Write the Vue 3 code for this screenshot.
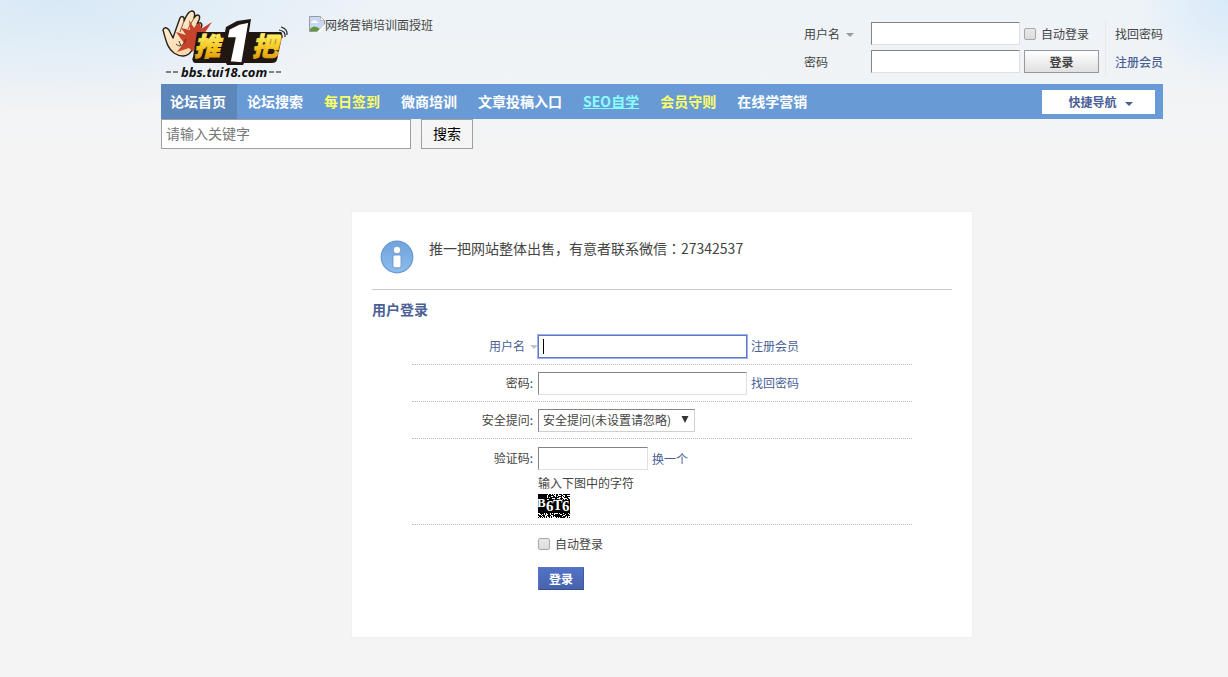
<script setup>
import { ref } from 'vue'

const navItems = [
  { label: '论坛首页', tone: 'active' },
  { label: '论坛搜索', tone: '' },
  { label: '每日签到', tone: 'yellow' },
  { label: '微商培训', tone: '' },
  { label: '文章投稿入口', tone: '' },
  { label: 'SEO自学', tone: 'cyan' },
  { label: '会员守则', tone: 'yellow' },
  { label: '在线学营销', tone: '' },
]

const top = ref({ user: '', password: '', auto: false })
const form = ref({ user: '', password: '', question: '0', code: '', auto: false })
const keyword = ref('')

// Speckles for the captcha: random runs in the strips above and below the characters.
const specks = []
let seed = 17
for (let y = 0; y < 24; y += 1) {
  for (let x = 0; x < 32; x += 1) {
    seed = (seed * 1103515245 + 12345) % 2147483648
    const edge = y < 6 || y > 18
    const left = x > 8 || y > 13
    if (left && edge && seed / 2147483648 < 0.38) specks.push({ x, y })
  }
}
</script>

<template>
  <div class="page">
    <div class="wrap">
      <header class="header">
        <a class="logo" href="#" aria-label="推1把">
          <svg width="130" height="72" viewBox="0 0 130 72">
            <defs>
              <linearGradient id="gold" x1="0" y1="0" x2="0" y2="1">
                <stop offset="0.2" stop-color="#fff36a" />
                <stop offset="0.6" stop-color="#f4c51f" />
                <stop offset="1" stop-color="#d88a08" />
              </linearGradient>
              <linearGradient id="skin" x1="0" y1="0" x2="1" y2="1">
                <stop offset="0" stop-color="#fff6df" />
                <stop offset="1" stop-color="#f6cf9c" />
              </linearGradient>
            </defs>
            <path d="M2 20 C3 16 8 18 9 22 L12 28 C14 22 16 16 19 8 C21 5 24 7 23 11 C25 6 28 1 31 1 C34 1 34 5 33 8 C36 3 40 5 38 10 L36 14 C40 11 42 14 40 18 L31 40 C27 48 19 47 13 43 C6 38 5 30 2 20 Z" fill="url(#skin)" stroke="#2b2019" stroke-width="1.4" stroke-linejoin="round" />
            <path d="M23 11 L19 22 M33 8 L27 19 M36 14 L31 23" fill="none" stroke="#6d4630" stroke-width="0.9" />
            <path d="M28 10 L33 18 L39 12 L40 19 L51 12 L43 24 L48 30 L37 31 L32 42 L28 38 L16 42 L23 33 L15 22 L25 25 L20 18 L29 20 Z" fill="#c8432b" />
            <path d="M15 34 C18 37 21 36 23 33 L25 29 M18 31 L20 36" fill="none" stroke="#4a2c1c" stroke-width="0.9" />
            <path d="M36 22 L64 22 L65 17 L76 11 L90 9 L88 22 L120 22 Q122 23 121 27 L116 50 Q115 53 111 53 L83 53 L82 55 L66 55 L65 53 L34 53 Q30 51 32 47 Z" fill="#201713" />
            <text x="33" y="46" font-size="26" font-style="italic" font-weight="900" fill="url(#gold)" stroke="url(#gold)" stroke-width="0.8">推</text>
            <text x="91" y="46" font-size="26" font-style="italic" font-weight="900" fill="url(#gold)" stroke="url(#gold)" stroke-width="0.8">把</text>
            <path d="M68 19 L78 14 L88 12 L81 53 L69 52 L74 28 L66 28 Z" fill="#fff" stroke="#201713" stroke-width="1.4" />
            <path d="M117 23 Q122 24 121 28 M118 20 Q125 21 124 27 M120 17 Q127 19 126 25" fill="none" stroke="#222" stroke-width="1.2" />
            <path d="M5 62 H10 M12 62 H17 M108 62 H113 M115 62 H120" stroke="#111" stroke-width="1.2" />
            <text class="domain" x="20" y="67" font-size="13">bbs.tui18.com</text>
          </svg>
        </a>
        <a class="banner" href="#">
          <svg width="16" height="16" viewBox="0 0 16 16" aria-hidden="true">
            <path d="M0.5 0.5 H11.5 L15.5 4.5 V9 L9 15.5 H0.5 Z" fill="#c8d8f4" stroke="#9b9b9b" />
            <path d="M11.5 0.5 V4.5 H15.5 Z" fill="#fff" stroke="#aaa" stroke-width="0.7" />
            <path d="M2 7 Q2 5 4 5 Q5 3 7 5 Q9 5 9 7 Z" fill="#fff" />
            <path d="M1 15 V13 Q5 8 11 13 L9 15 Z" fill="#5d9b3c" />
            <path d="M16 8 L8 16 H11 L16 11 Z" fill="#fff" />
          </svg>
          <span>网络营销培训面授班</span>
        </a>
        <form class="quick-login" @submit.prevent>
          <label class="quick-label" for="top-user">用户名 <i class="caret grey"></i></label>
          <input id="top-user" v-model="top.user" class="field" type="text" />
          <label class="auto"><input v-model="top.auto" class="tick" type="checkbox" />自动登录</label>
          <a class="side" href="#">找回密码</a>
          <label class="quick-label" for="top-pass">密码</label>
          <input id="top-pass" v-model="top.password" class="field" type="password" />
          <button class="grey-button" type="submit">登录</button>
          <a class="side strong" href="#">注册会员</a>
        </form>
      </header>

      <nav class="nav">
        <a v-for="item in navItems" :key="item.label" href="#" :class="item.tone">{{ item.label }}</a>
        <button class="shortcut" type="button">快捷导航<i class="caret blue"></i></button>
      </nav>

      <form class="search" @submit.prevent>
        <input v-model="keyword" type="text" placeholder="请输入关键字" aria-label="请输入关键字" />
        <button type="submit">搜索</button>
      </form>

      <main class="card">
        <div class="notice">
          <svg width="34" height="34" viewBox="0 0 34 34" aria-hidden="true">
            <defs>
              <linearGradient id="info" x1="0" y1="0" x2="0" y2="1">
                <stop offset="0" stop-color="#6fa3dd" />
                <stop offset="1" stop-color="#8dbcec" />
              </linearGradient>
            </defs>
            <circle cx="17" cy="17" r="15.8" fill="url(#info)" stroke="#6797cf" stroke-width="1.2" />
            <circle cx="17" cy="10" r="3.8" fill="#fff" stroke="#5f8fc8" stroke-width="0.8" />
            <rect x="13" y="15" width="8" height="12.8" rx="1.8" fill="#fff" stroke="#5f8fc8" stroke-width="0.8" />
          </svg>
          <p>推一把网站整体出售，有意者联系微信：27342537</p>
        </div>
        <h1>用户登录</h1>
        <form class="login" @submit.prevent>
          <div class="row">
            <label class="name link" for="user">用户名<i class="caret pale"></i></label>
            <span class="focus">
              <input id="user" v-model="form.user" class="field wide" type="text" />
              <i class="cursor"></i>
            </span>
            <a href="#">注册会员</a>
          </div>
          <div class="row">
            <label class="name" for="pass">密码:</label>
            <input id="pass" v-model="form.password" class="field wide" type="password" />
            <a href="#">找回密码</a>
          </div>
          <div class="row">
            <label class="name" for="question">安全提问:</label>
            <span class="select">
              <select id="question" v-model="form.question">
                <option value="0">安全提问(未设置请忽略)</option>
              </select>
              <svg width="8" height="7" viewBox="0 0 8 7" aria-hidden="true"><path d="M0.5 0 H7.5 L4 7 Z" fill="#333" /></svg>
            </span>
          </div>
          <div class="row code">
            <label class="name" for="code">验证码:</label>
            <div>
              <div class="line">
                <input id="code" v-model="form.code" class="field short" type="text" />
                <a href="#">换一个</a>
              </div>
              <p>输入下图中的字符</p>
              <svg class="captcha" width="32" height="24" viewBox="0 0 32 24">
                <rect width="32" height="24" fill="#000" />
                <rect v-for="s in specks" :key="s.y * 32 + s.x" :x="s.x" :y="s.y" width="1" height="1" fill="#fff" />
                <g>
                  <text x="-1" y="13" font-size="13">B</text>
                  <text x="15" y="16" font-size="14">T</text>
                  <text x="8" y="17" font-size="15">6</text>
                  <text x="24" y="17" font-size="15">6</text>
                </g>
              </svg>
            </div>
          </div>
          <div class="row submit">
            <label class="auto"><input v-model="form.auto" class="tick" type="checkbox" />自动登录</label>
            <button type="submit">登录</button>
          </div>
        </form>
      </main>
    </div>
  </div>
</template>

<style>
body {
  margin: 0;
  background: #f4f4f4;
}
</style>

<style scoped>
* {
  box-sizing: border-box;
}
.page {
  min-height: 100vh;
  padding: 0 65px 0 161px;
  font: 12px/18px "Noto Sans CJK SC", sans-serif;
  color: #444;
  background:
    radial-gradient(ellipse 320px 110px at 60px 0, #d8e9f6, transparent),
    radial-gradient(ellipse 90px 90px at 100% 0, #d8eaf9, transparent),
    linear-gradient(#edf3f8, #f4f4f4 160px);
}
a {
  color: #4a5f96;
  text-decoration: none;
}
p,
h1 {
  margin: 0;
}
input,
select,
button {
  font: inherit;
  color: inherit;
  margin: 0;
  border-radius: 0;
}
.header {
  display: flex;
  align-items: flex-start;
  height: 84px;
}
.logo {
  margin-top: 10px;
  height: 72px;
}
.domain {
  font-family: "Noto Sans", sans-serif;
  font-weight: 700;
  font-style: italic;
  fill: #111;
}
.banner {
  display: flex;
  margin: 16px auto 0 18px;
  color: #444;
}
.quick-login {
  display: grid;
  grid-template-columns: 67px 149px 75px 68px;
  grid-auto-rows: 23px;
  row-gap: 5px;
  align-items: center;
  padding-top: 22px;
}
.field {
  height: 23px;
  padding: 2px 4px;
  border: 1px solid;
  border-color: #848484 #e0e0e0 #e0e0e0 #848484;
  background: #fff;
}
.caret {
  display: inline-block;
  border: 4px solid transparent;
  border-bottom-width: 0;
  border-top-color: currentColor;
  vertical-align: 2px;
}
.caret.grey {
  margin-left: 3px;
  color: #999;
}
.caret.blue {
  margin-left: 8px;
  color: #4a5f96;
  vertical-align: 1px;
}
.caret.pale {
  margin-left: 5px;
  color: #c4c4c4;
}
.auto {
  display: flex;
  align-items: center;
}
.tick {
  appearance: none;
  width: 12px;
  height: 12px;
  margin-right: 5px;
  border: 1px solid #a8a8a8;
  border-radius: 2px;
  background: linear-gradient(#e9e9e9, #dcdcdc);
}
.tick:checked {
  background: #4a6cb8;
}
.quick-login .auto {
  margin-left: 4px;
}
.grey-button {
  height: 23px;
  margin-left: 4px;
  margin-right: -4px;
  padding: 0;
  border: 1px solid #999;
  background: linear-gradient(#fff, #e0e0e0);
  font-weight: 700;
  line-height: 20px;
}
.side {
  justify-self: end;
  padding-left: 9px;
  color: #444;
  line-height: 27px;
  border-left: 1px solid #e8ebee;
}
.side.strong {
  color: #4a5f96;
  font-weight: 500;
}
.nav {
  display: flex;
  align-items: center;
  height: 35px;
  padding-right: 8px;
  background: #689ad6;
}
.nav a {
  padding: 0 11px 0 10px;
  color: #fff;
  font-size: 14px;
  font-weight: 700;
  line-height: 35px;
  white-space: nowrap;
}
.nav a.active {
  padding: 0 11px 0 9px;
  background: #5b87ba;
}
.nav a.yellow {
  color: #ff6;
}
.nav a.cyan {
  color: #8ff;
  text-decoration: underline;
}
.shortcut {
  width: 113px;
  height: 24px;
  margin-left: auto;
  padding: 0 0 0 4px;
  border: 0;
  background: #fff;
  color: #4a5f96;
  font-weight: 700;
}
.search {
  display: flex;
  gap: 10px;
}
.search input,
.search button {
  height: 30px;
  border: 1px solid #a0a0a0;
  font-size: 14px;
}
.search input {
  width: 250px;
  padding: 0 4px 2px;
  background: #fff;
}
.search input::placeholder {
  color: #777;
}
.search button {
  width: 52px;
  padding: 0 0 2px;
  background: #f5f5f5;
  color: #000;
}
.card {
  width: 622px;
  max-width: 100%;
  margin: 62px auto 40px;
  padding: 20px 20px 47px;
  border: 1px solid #f0f0f0;
  background: #fff;
}
.notice {
  display: flex;
  gap: 15px;
  height: 58px;
  margin-bottom: 9px;
  padding: 0 8px;
  border-bottom: 1px solid #ccc;
}
.notice svg {
  margin-top: 8px;
}
.notice p {
  padding-top: 7px;
  font-family: "Noto Sans CJK JP", sans-serif;
  font-size: 14px;
  line-height: 18px;
}
h1 {
  color: #4a5f96;
  font-size: 14px;
  font-weight: 700;
  line-height: 20px;
}
.login {
  width: 500px;
  margin: 9px auto 0;
}
.row {
  display: flex;
  align-items: center;
  gap: 4px;
  height: 37px;
  border-bottom: 1px dotted #bbb;
}
.name {
  width: 122px;
  padding-right: 1px;
  text-align: right;
  white-space: nowrap;
}
.name.link {
  padding-right: 0;
  margin-right: -4px;
  width: 126px;
  color: #4a5f96;
}
.wide {
  width: 209px;
}
.short {
  width: 110px;
}
.focus {
  position: relative;
  display: flex;
}
.focus .field {
  border-color: #5a7bcc;
  box-shadow: 0 0 0 1px #9fb2e3;
}
.cursor {
  position: absolute;
  left: 5px;
  top: 4px;
  width: 1px;
  height: 15px;
  background: #000;
}
.select {
  position: relative;
  display: flex;
}
.select select {
  appearance: none;
  width: 157px;
  height: 23px;
  padding: 0 4px;
  border: 1px solid;
  border-color: #848484 #d0d0d0 #d0d0d0 #848484;
  background: #fff;
}
.select svg {
  position: absolute;
  right: 6px;
  top: 7px;
  pointer-events: none;
}
.code {
  align-items: flex-start;
  height: auto;
  padding: 8px 0 6px;
}
.code .name {
  line-height: 22px;
}
.line {
  display: flex;
  align-items: center;
  gap: 4px;
}
.code p {
  padding-top: 4px;
  line-height: 18px;
  margin-bottom: 2px;
}
.captcha {
  display: block;
}
.captcha text {
  font-family: "Liberation Serif", serif;
  font-weight: 700;
  fill: #fff;
  stroke: #000;
  stroke-width: 1px;
  paint-order: stroke;
}
.submit {
  flex-direction: column;
  align-items: flex-start;
  gap: 14px;
  height: auto;
  padding: 10px 0 0 126px;
  border: 0;
}
.submit button {
  width: 46px;
  height: 23px;
  padding: 0;
  border: 1px solid;
  border-color: #5674c2 #3f5a9e #34508f #5674c2;
  background: linear-gradient(#5272c4, #4763ad);
  color: #fff;
  font-weight: 700;
  line-height: 20px;
}
</style>
